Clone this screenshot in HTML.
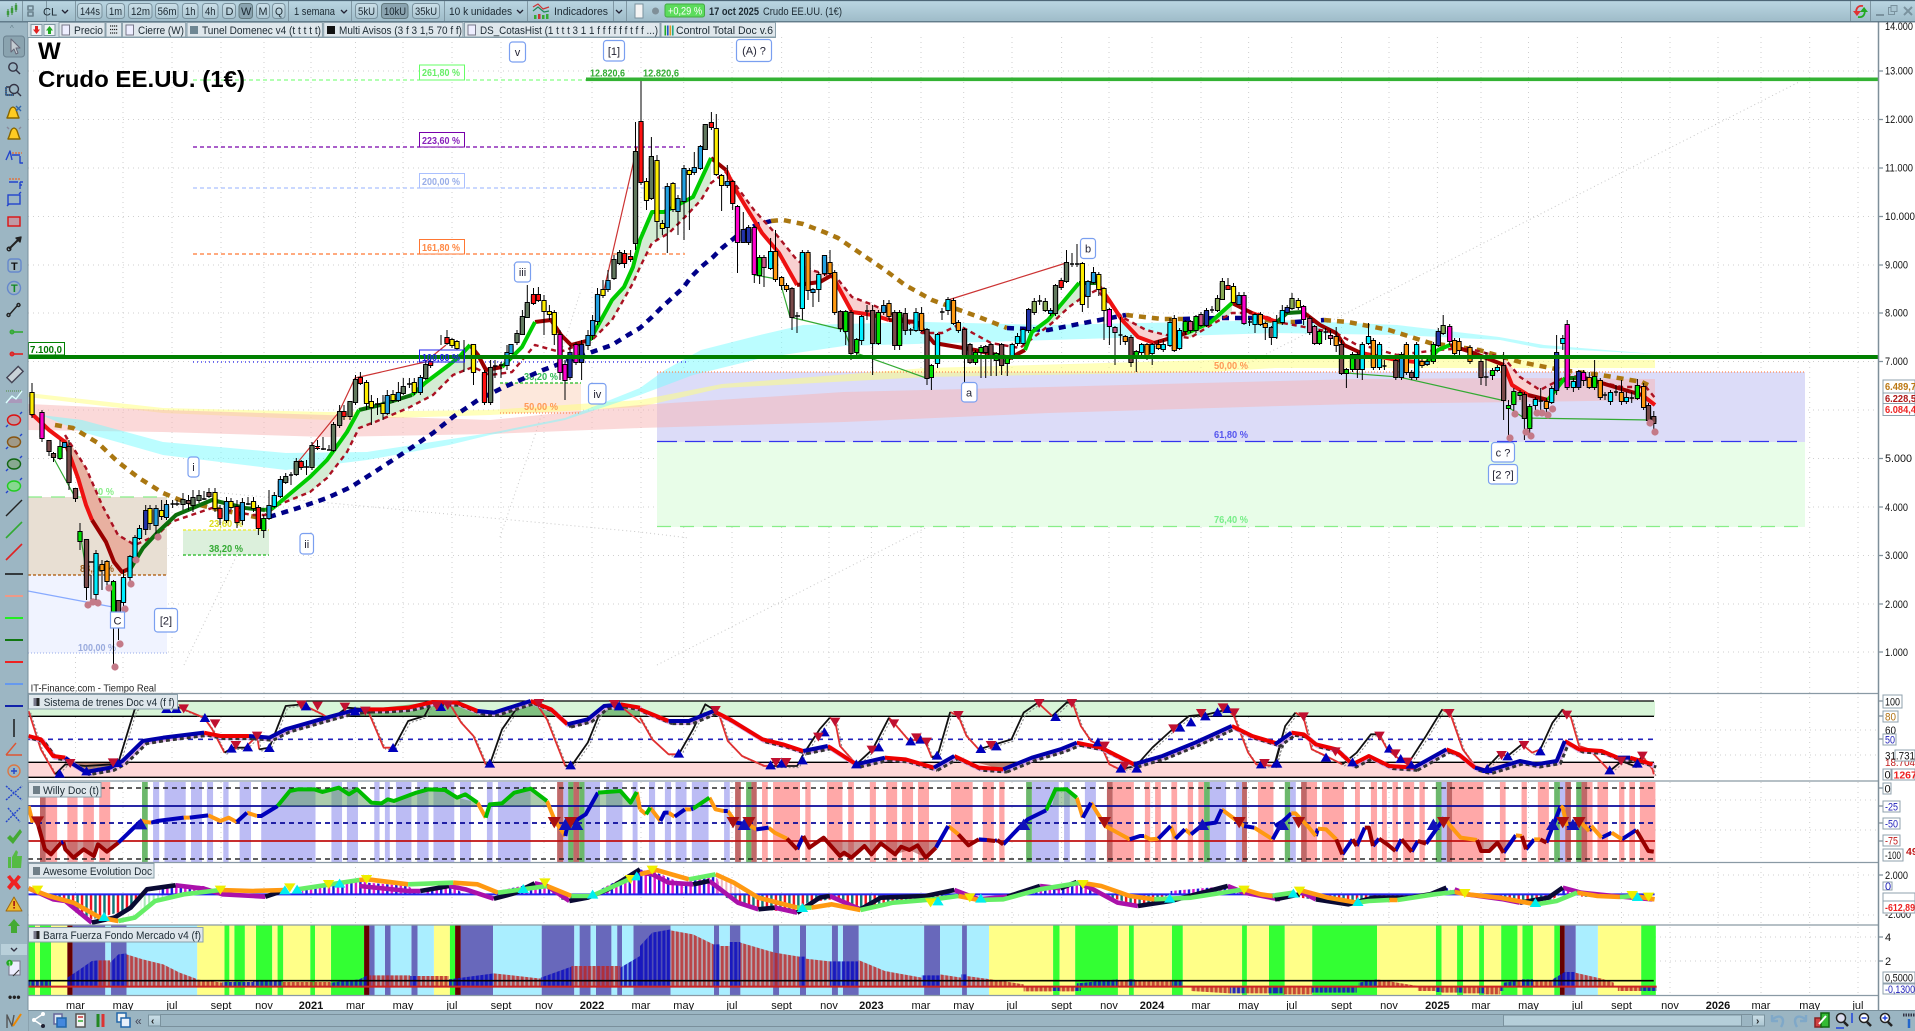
<!DOCTYPE html>
<html lang="es"><head><meta charset="utf-8"><title>Crudo EE.UU. (1€)</title>
<style>
html,body{margin:0;padding:0;background:#fff;width:1915px;height:1031px;overflow:hidden}
svg{display:block;font-family:"Liberation Sans",sans-serif}
path{vector-effect:non-scaling-stroke;stroke-linejoin:round}
.b{vector-effect:none}
.f{fill:none}
.tb{font-size:11px;fill:#1c2a33}
.ax{font-size:11px;fill:#111}
.fb{font-size:10px;font-weight:bold}
.btn{fill:url(#bg);stroke:#7a929e;stroke-width:1}
.on{fill:#8aa3af;stroke:#62797f;stroke-width:1}
.lg{fill:#dfe7ec;stroke:#8ba0ab;stroke-width:1}
.bx{fill:#fff;stroke:#8fa0ac;stroke-width:1}
.wv{fill:#fff;stroke:#7a9ff0;stroke-width:1.2}
.wt{font-size:11px;fill:#223;text-anchor:middle}
.mk{fill:none;stroke:none}
</style></head><body>
<svg width="1915" height="1031" viewBox="0 0 1915 1031" xmlns="http://www.w3.org/2000/svg">
<defs>
<linearGradient id="tg" x1="0" y1="0" x2="0" y2="1"><stop offset="0" stop-color="#bbd7e3"/><stop offset="1" stop-color="#9ebbc8"/></linearGradient>
<linearGradient id="bg" x1="0" y1="0" x2="0" y2="1"><stop offset="0" stop-color="#cbdfe8"/><stop offset="1" stop-color="#aac5d1"/></linearGradient>
<marker id="u1" markerUnits="userSpaceOnUse" overflow="visible" markerWidth="1" markerHeight="1"><path d="M0-14 13 13H-13z" fill="#0000bb"/></marker>
<marker id="d1" markerUnits="userSpaceOnUse" overflow="visible" markerWidth="1" markerHeight="1"><path d="M-13-13H13L0 14z" fill="#c01030"/></marker>
<marker id="u2" markerUnits="userSpaceOnUse" overflow="visible" markerWidth="1" markerHeight="1"><path d="M0-17 16 17H-16z" fill="#1111bb"/></marker>
<marker id="d2" markerUnits="userSpaceOnUse" overflow="visible" markerWidth="1" markerHeight="1"><path d="M-16-17H16L0 17z" fill="#aa1111"/></marker>
<marker id="u3" markerUnits="userSpaceOnUse" overflow="visible" markerWidth="1" markerHeight="1"><path d="M0-14 14 13H-14z" fill="#00eeee"/></marker>
<marker id="d3" markerUnits="userSpaceOnUse" overflow="visible" markerWidth="1" markerHeight="1"><path d="M-14-13H14L0 14z" fill="#eeee00"/></marker>
<marker id="dot" markerUnits="userSpaceOnUse" overflow="visible" markerWidth="1" markerHeight="1"><circle r="3.6" fill="#c47a88"/></marker>
<pattern id="bm" patternUnits="userSpaceOnUse" width="22" height="10"><rect x="0" width="6" height="10" fill="#1818dd"/><rect x="11" width="6" height="10" fill="#dd11cc"/></pattern>
<pattern id="rt" patternUnits="userSpaceOnUse" width="22" height="10"><rect x="0" width="6" height="10" fill="#ee1122"/><rect x="11" width="6" height="10" fill="#117777"/></pattern>
<pattern id="lg" patternUnits="userSpaceOnUse" width="11" height="10"><rect width="5" height="10" fill="#a8e8b8"/></pattern>
<pattern id="lp" patternUnits="userSpaceOnUse" width="11" height="10"><rect width="5" height="10" fill="#f0b8c0"/></pattern>
<pattern id="hr" patternUnits="userSpaceOnUse" width="11" height="10"><rect width="11" height="10" fill="#c23030" fill-opacity=".35"/><rect width="7" height="10" fill="#bb2222" fill-opacity=".75"/></pattern>
<pattern id="hb" patternUnits="userSpaceOnUse" width="11" height="10"><rect width="11" height="10" fill="#1a1ab0" fill-opacity=".35"/><rect width="7" height="10" fill="#1010c0" fill-opacity=".85"/></pattern>

<g id="all" fill="none">
<path id="cY" d="M32 393V414M150 509V523M161.6 511V516M215 493V508M231 502V507M253.5 502V508M366.5 383V403M371.4 402V407M383 404V413M393 395V400M414.3 383V392M452 340V345M457 342V348M473.5 345V372M544 301V311M549.4 312V314M554.3 313V334M603 290V295M646.5 182V200M657 161V221M662.4 224V228M673 184V209M689.4 171V174M716.3 129V174M721.6 176V185M1082.4 264V304M1098.8 275V289M1104 289V310M1233.5 287V302M1298.3 301V307"/>
<path id="cM" d="M42 413V438M560 335V372M565 365V380M576 345V362M737.5 207V242M754.3 228V274M1109.4 310V326M1244 296V323M1303.6 307V319M1449.7 327V341M1567.2 325V387M1583.6 373V380"/>
<path id="cB" d="M49 441V451M53.5 454V457M69 447V482M75.5 489V498M86.5 540V587M118.5 601V612M188.5 501V503M209 493V496M792 289V317M840.4 312V328M851 313V353M872.6 311V343M894.7 313V345M905.3 314V330M927 330V378M964.5 330V355M970 345V362M985.7 347V352M991 345V358M1001.6 345V365M1131 338V362M1271.4 328V337M1341.5 345V373M1357.4 355V369M1395.8 361V377M1411.7 373V377M1481 362V377M1503.6 366V400M1524.4 395V418M1648.5 406V420M1653.8 417V423"/>
<path id="cG" d="M183 500V504M193 498V505M199 496V500M285.7 477V482M296.3 462V474M312 446V467M333.5 425V450M339.6 412V425M350 402V416M355.5 380V402M403.3 387V393M425.7 365V378M490.6 368V402M517 334V342M522.4 317V334M527.3 303V317M614 260V278M619.6 253V263M635.5 152V243M651.4 157V198M705.3 125V149M1055.5 286V313M1066.5 263V281"/>
<path id="cO" d="M1034.3 302V312M1045.3 302V310M1217.5 299V310M1222.4 282V299M1292 299V308M1443.2 326V333"/>
<path id="cC" d="M96 554V594M123.5 578V602M130 557V577M135 538V557M139.5 529V538M274.3 496V506M770.6 252V268M802.4 253V308M818.8 275V289M861.6 317V340M916 313V330M937.5 335V363M948 300V310M1012.2 345V357M1017.5 337V343M1023 330V343M1141.6 345V352M1152.2 345V353M1163.3 345V349M1170 323V345M1179.6 331V348M1255 315V324M1275 322V337M1282.3 311V322M1362.3 345V369M1368.5 337V343M1379.5 345V367M1416.6 345V377M1497.4 368V370M1535.4 400V405M1551.7 389V402M1573.4 382V387M1610.5 393V401M1626.4 398V401M1562.8 339V343"/>
<path id="cL" d="M64.5 443V447M156 509V525M166.5 505V517M226.5 502V520M242.4 503V520M269 506V518M280.4 480V496M387.3 396V413M398.4 393V400M420.4 378V392M507 353V365M511 345V353M588 336V345M592.6 321V335M597.5 295V321M608 281V289M667.3 187V227M678 199V211M684 169V201M694.3 168V172M700.4 147V168M727.3 182V185M813 290V292M824.5 256V273M883.7 306V312M1050.6 311V313M1088 282V296M1093.5 273V282M1239 296V304M1401.5 355V377M1427.2 362V364"/>
<path id="cN" d="M145.7 511V529M570 353V377M581.6 345V362M743.3 230V242M748.6 228V242M1028.6 310V330M1206.5 311V325M1287.2 308V312M1438.3 332V345M1556.6 353V390M1578.7 372V387"/>
<path id="cR" d="M220 509V518M237 507V522M258.4 508V528M301.2 462V467M317.5 447V448M344 412V416M360.4 378V383M430.6 362V365M447 338V343M484.5 373V402M533.5 295V303M538.4 295V300M624.5 254V263M630.6 257V259M641 122V182M711.4 123V127M732.7 182V203M1061.2 281V287M1228 286V289"/>
<path id="cA" d="M102 565V570M107 562V581M775.5 252V279M781.6 278V285M786.5 286V289M808 253V290M830 263V273M834.7 273V312M889 304V316M921.6 314V330M953.5 301V323M958.4 323V330M1125.3 337V341M1147 345V355M1158.4 345V348M1174.3 319V350M1260.4 315V324M1265.3 324V327M1336.2 337V345M1373.4 341V367M1406.4 345V372M1422 362V365M1454.6 341V353M1459 342V350M1470 348V361M1546.4 402V408M1589.3 378V387M1600.3 381V397M1621.5 393V401M1643.6 387V407"/>
<path id="cE" d="M60 447V458M80 532V541M113.5 582V612M263.7 519V530M759.6 258V275M845.7 312V331M856.7 340V352M878.4 313V343M899.6 313V345M931.4 366V377M975.5 353V362M981 348V352M996.3 354V360M1007.3 359V363M1136.3 352V355M1185.3 322V331M1196 317V330M1319.5 332V343M1346.4 370V373M1352.5 355V369M1433.4 345V361M1492.5 371V375M1508.5 406V408M1513.8 392V404M1520 393V395M1529.7 407V428M1594.6 377V387M1637.4 386V398"/>
<path id="cP" d="M764 258V267M1115 328V332M1190.6 322V330M1201 315V325M1309.7 319V332M1314.6 327V343M1330.5 336V338"/>
</g>

<path id="r7" d="M70 150 100 160 130 210 160 215M500 140 540 150 610 150M900 70 940 70 1000 65 1060 48 1120 50 1170 75M1300 45 1350 70 1390 115M1520 55 1568 65"/>
<path id="n7" d="M160 215 180 235 210 258 270 245 300 225 350 165 400 155 500 140M610 150 660 155 700 130 800 95 860 75 900 70M1170 75 1210 80 1300 45M1390 115 1440 100 1480 60 1520 55"/>
<path id="r8" d="M0 70 70 105M180 75 220 100 300 160 350 175 400 195M460 180 530 235M600 215 650 220 720 245M770 210 830 245 890 250M1070 170 1130 185 1210 235M1450 120 1500 150 1568 175"/>
<path id="n8" d="M70 105 120 105 180 75M400 195 460 180M530 235 600 215M720 245 770 210M890 250 960 215 1030 190 1070 170M1210 235 1280 210 1360 170 1450 120"/>
<path id="r9" d="M0 175M40 140 70 145 100 175 150 190 190 235 230 210 280 240 340 245M420 190 450 205 490 245M710 165 745 190 800 195 840 215M870 215 925 235"/>
<path id="n9" d="M0 175 40 140M340 245 420 190M490 245 520 255 600 225 640 235 690 225 710 165M840 215 870 215"/>
<path id="tr7" d="M70 75 100 190 135 265M440 65 500 95 520 130 550 200M600 185 630 150 635 190M740 55 790 85 810 100M900 70 940 185 965 185M1100 50 1130 110 1160 150 1190 235M1310 45 1340 100 1385 240M1510 50 1560 100 1568 110"/>
<path id="tk7" d="M135 265 160 235 210 240 275 235 290 230 330 70 370 45 440 65M550 200 570 185 600 185M635 190 660 185 700 60 740 55M810 100 850 65 900 70M965 185 1000 105 1040 90 1060 45 1100 50M1190 235 1200 235 1230 130 1270 60 1310 45M1385 240 1400 240 1440 170 1470 80 1510 50"/>
<path id="tr8" d="M0 95 30 160 70 205 95 205M180 70 195 90 215 165 250 210 305 240 320 240M465 95 478 105 490 180 530 235M610 95 625 115 660 165 680 160 700 170 715 215M760 78 780 90 800 150 830 190M975 50 1010 90M1060 50 1080 120 1105 165 1130 180 1150 235 1175 250M1440 70 1455 90 1490 200 1510 235 1555 240"/>
<path id="tk8" d="M95 205 130 130 160 55 180 70M320 240 385 240 400 205 440 130 465 95M530 235 570 190 610 95M715 215 730 205 760 78M830 190 870 175 910 160 940 80 975 50M1010 90 1045 50 1060 50M1175 250 1215 240 1255 185 1300 135 1345 90 1390 85 1440 70M1555 240 1568 180"/>
<path id="tr9" d="M50 80 70 95 90 190 125 210 165 235M255 145 275 190 300 215 325 235M410 70 430 85 460 190 490 240 515 250M550 205 570 210M605 175 630 200 650 190M705 70 725 95 745 180 770 190 820 255M900 210 925 250 928 265"/>
<path id="tk9" d="M0 230 25 120 50 80M165 235 200 200 235 145 255 145M325 235 370 150 410 70M515 250 550 205M570 210 605 175M650 190 680 110 705 70M820 255 850 225 880 240 900 210"/>
</defs>

<rect width="1915" height="1031" fill="#fff"/>

<!-- vertical grid -->
<path fill="none" stroke="#cfcfcf" stroke-width="1" stroke-dasharray="1 4" d="M75.5 37V995M123 37V995M172 37V995M221 37V995M264 37V995M311 37V995M355.5 37V995M403 37V995M452 37V995M501 37V995M544 37V995M592 37V995M641 37V995M683.7 37V995M732 37V995M781.6 37V995M829 37V995M871.4 37V995M921 37V995M963.7 37V995M1012 37V995M1061.6 37V995M1109 37V995M1152 37V995M1201 37V995M1248.6 37V995M1291.7 37V995M1341.5 37V995M1389 37V995M1437.4 37V995M1481 37V995M1528.5 37V995M1577.4 37V995M1621.5 37V995M1670 37V995M1718 37V995M1761 37V995M1809.7 37V995M1858 37V995"/>
<!-- horizontal grid -->
<path fill="none" stroke="#cfcfcf" stroke-width="1" stroke-dasharray="1 4" d="M28 71H1878M28 119.5H1878M28 168H1878M28 216.5H1878M28 265H1878M28 313H1878M28 361.5H1878M28 410H1878M28 458.5H1878M28 507H1878M28 555.5H1878M28 604H1878M28 652H1878M1655 730H1878M1655 755H1878M1655 800H1878M1655 830H1878M28 875H1878M28 915H1878M1655 937H1878M1655 961H1878"/>

<!-- gray dotted trend lines -->
<path fill="none" stroke="#c8c8c8" stroke-width="1" stroke-dasharray="1 3" d="M657 665 1799 82M212 492 640 532 689 538M184 665 237 555M122 638 167 548M500 537 535 435 581 290"/>

<!-- left fib rects -->
<rect x="28" y="497" width="139" height="78" fill="#e8dfd3"/>
<rect x="28" y="575" width="139" height="78" fill="#f0f3ff"/>
<rect x="183" y="530" width="86" height="25" fill="#dcf0dc"/>
<rect x="500" y="383" width="81" height="30" fill="#fde8dc"/>
<!-- big fib rects -->
<rect x="657" y="372" width="1148" height="70" fill="#dcdcf8"/>
<rect x="657" y="442" width="1148" height="85" fill="#e8fde8"/>

<!-- ribbons -->
<path fill="#ffff78" fill-opacity=".5" d="M28 393 163 408 327 412 490 410 640 400 722 384 926 368 1211 360 1275 358 1655 360V368L1275 368 1211 372 926 377 722 388 640 407 490 415 327 420 163 413 28 397z"/>
<path fill="#f8b4b4" fill-opacity=".5" d="M28 404 163 410 327 415 490 420 640 405 844 392 1048 387 1280 381 1357 379 1520 378 1655 379V400L1520 402 1357 404 1280 406 1048 413 844 422 640 428 490 434 327 437 163 432 28 430z"/>
<path fill="#78fbff" fill-opacity=".5" d="M41 415 82 420 163 442 286 453 367 452 490 433 565 418 640 388 665 370 701 350 760 335 803 325 926 322 1048 325 1280 320 1397 325 1499 337 1544 345 1655 354 1540 348 1500 340 1400 335 1275 333 1050 340 844 346 762 358 693 375 640 395 565 420 490 435 449 445 367 460 286 470 163 455 82 432z"/>

<!-- fib lines -->
<path fill="none" stroke="#66ff66" stroke-width="1" stroke-dasharray="4 3" d="M193 80H586"/>
<path fill="none" stroke="#7700aa" stroke-width="1.2" stroke-dasharray="4 3" d="M193 147H685"/>
<path fill="none" stroke="#aac0ff" stroke-width="1.2" stroke-dasharray="4 3" d="M193 188H685"/>
<path fill="none" stroke="#ff7733" stroke-width="1.2" stroke-dasharray="4 3" d="M193 254H685"/>
<path fill="none" stroke="#2222ee" stroke-width="1.2" stroke-dasharray="1 3" d="M193 362H687"/>
<path fill="none" stroke="#22bb22" stroke-width="1.2" stroke-dasharray="3 2" d="M500 383H581M183 555H269"/>
<path fill="none" stroke="#ff8855" stroke-width="1.2" stroke-dasharray="1 2" d="M500 413H581M657 372H1805"/>
<path fill="none" stroke="#eeee22" stroke-width="1.2" stroke-dasharray="3 2" d="M183 530H269"/>
<path fill="none" stroke="#88ee88" stroke-width="1.2" stroke-dasharray="14 9" d="M28 497H167M657 526.5H1805"/>
<path fill="none" stroke="#aa5500" stroke-width="1.2" stroke-dasharray="3 2" d="M28 575H167"/>
<path fill="none" stroke="#aabbee" stroke-width="1.2" stroke-dasharray="1 2" d="M28 653H167"/>
<path fill="none" stroke="#3333ee" stroke-width="1.2" stroke-dasharray="20 8" d="M657 441.5H1805"/>

<!-- fib labels -->
<rect x="419.5" y="65" width="45" height="15" fill="#fff" stroke="#66ff66"/><text class="fb" x="422" y="76" fill="#66ee66" textLength="38" lengthAdjust="spacingAndGlyphs">261,80 %</text>
<rect x="419.5" y="132.5" width="45" height="14.5" fill="#fff" stroke="#7700aa"/><text class="fb" x="422" y="144" fill="#8822bb" textLength="38" lengthAdjust="spacingAndGlyphs">223,60 %</text>
<rect x="419.5" y="173.5" width="45" height="14.5" fill="#fff" stroke="#aac0ff"/><text class="fb" x="422" y="185" fill="#99aee8" textLength="38" lengthAdjust="spacingAndGlyphs">200,00 %</text>
<rect x="419.5" y="239.5" width="45" height="14.5" fill="#fff" stroke="#ff7733"/><text class="fb" x="422" y="251" fill="#ff8844" textLength="38" lengthAdjust="spacingAndGlyphs">161,80 %</text>
<text class="fb" x="80" y="495" fill="#88ee88" textLength="34" lengthAdjust="spacingAndGlyphs">76,40 %</text>
<text class="fb" x="80" y="572" fill="#a06020" textLength="34" lengthAdjust="spacingAndGlyphs">88,20 %</text>
<text class="fb" x="78" y="651" fill="#99aadd" textLength="38" lengthAdjust="spacingAndGlyphs">100,00 %</text>
<text class="fb" x="209" y="527" fill="#dddd22" textLength="34" lengthAdjust="spacingAndGlyphs">23,60 %</text>
<text class="fb" x="209" y="552" fill="#33aa33" textLength="34" lengthAdjust="spacingAndGlyphs">38,20 %</text>
<text class="fb" x="524" y="380" fill="#33bb55" textLength="34" lengthAdjust="spacingAndGlyphs">38,20 %</text>
<text class="fb" x="524" y="410" fill="#ff9955" textLength="34" lengthAdjust="spacingAndGlyphs">50,00 %</text>
<text class="fb" x="1214" y="369" fill="#ff9955" textLength="34" lengthAdjust="spacingAndGlyphs">50,00 %</text>
<text class="fb" x="1214" y="438" fill="#5555ee" textLength="34" lengthAdjust="spacingAndGlyphs">61,80 %</text>
<text class="fb" x="1214" y="523" fill="#77ee88" textLength="34" lengthAdjust="spacingAndGlyphs">76,40 %</text>

<!-- fills between fast and slow lines -->
<path fill="#e8b0a0" d="M65 442 78 478 86 505 92 520 106 542 114 562 122 572 131 568 135 545 118 535 102 505 86 468 65 435z"/>
<path fill="#d4ecd4" d="M273 508 310 477 327 460 347 432 359 410 380 405 412 395 425 383 449 365 461 355 470 345 473 367 453 375 433 395 408 408 375 422 359 428 347 452 327 478 310 492 278 505zM590 340 612 300 624 287 633 267 640 240 652 212 664 212 693 197 711 158 711 183 701 200 685 217 669 233 652 243 640 267 633 283 612 320 592 340zM1032 332 1048 320 1069 295 1079 283 1083 297 1069 307 1052 323zM1187 333 1211 322 1232 303 1232 313 1211 325 1190 338z"/>
<path fill="#f9d0d0" d="M726 170 746 207 762 233 779 253 797 285 820 282 832 275 852 312 873 315 917 322 922 333 905 320 873 305 852 297 836 277 811 270 797 260 775 233 754 210 730 178zM1097 283 1109 300 1122 320 1138 337 1154 343 1166 335 1146 330 1122 317 1097 290zM1504 365 1512 385 1528 395 1548 400 1540 390 1520 377 1504 358zM1585 378 1642 395 1655 405 1655 398 1646 387 1622 387 1569 375z"/>

<!-- slow MA coloured -->
<path class="f" stroke="#aa7711" stroke-width="4.5" stroke-dasharray="7 6" d="M55 425 73 428 98 443 118 462 139 478 163 493 180 500 212 508 245 515 261 518M771 221 783 220 803 224 824 232 838 238 860 253 885 270 905 285 932 300 954 308 979 317 1007 328M1126 315 1162 319 1183 319M1252 318 1280 322 1295 322M1324 320 1348 322 1389 330 1430 343 1479 350 1520 362 1561 370 1601 375 1642 382 1648 385"/>
<path class="f" stroke="#000088" stroke-width="4.5" stroke-dasharray="7 6" d="M269 517 298 508 327 498 351 487 376 471 408 450 433 433 453 417 478 400 502 388 543 370 592 352 612 345 628 335 640 328 652 317 662 307 683 288 691 277 701 267 713 257 722 248 738 235 756 225 771 221M1007 328 1048 330 1089 322 1126 315M1183 319 1220 318 1252 318M1295 322 1324 320"/>

<!-- slow dashed red -->
<path class="f" stroke="#aa1122" stroke-width="2.4" stroke-dasharray="5 4" d="M65 435 86 468 102 505 118 535 135 545 157 535 171 522 212 508 253 515 265 515 278 505 310 492 327 478 347 452 359 428 375 422 408 408 433 395 453 375 473 367 490 375 512 372 535 345 560 352 592 340 612 320 633 283 640 267 652 243 669 233 685 217 701 200 711 183 726 172 754 210 775 233 797 260 811 270 836 277 852 297 873 305 905 320 922 333 942 333 958 325 991 343 1020 348 1052 323 1069 307 1083 297 1097 290 1122 317 1146 330 1166 335 1190 338 1211 325 1232 313 1256 313 1283 323 1336 333 1357 345 1369 347 1397 355 1438 350 1467 348 1504 358 1520 377 1540 390 1569 375 1622 387 1646 387 1655 398"/>

<!-- thin trend lines -->
<path class="f" stroke="#33aa33" stroke-width="1.2" d="M53 457 75.5 498M80 532 86 570M754 275 777 279M781 285 790 317 844 330 850 345M856 353 926 378M1346 373 1399 377 1501 400M1508 407 1524 418 1650 420"/>
<path class="f" stroke="#cc3333" stroke-width="1.2" d="M298 462 339 412 355 378 425 362 446 345M604 290 637 147M948 300 1066 263"/>
<path class="f" stroke="#88aaff" stroke-width="1.2" d="M28 591 118 608"/>

<!-- fast line -->
<g fill="none" stroke-width="4">
<path stroke="#ee1111" d="M31 413 49 430 65 442 78 478 86 505 92 520M726 170 734 187 746 207 762 233 779 253 797 285M832 275 840 290 852 312 873 315 889 320M1097 283 1109 300 1122 320 1138 337 1154 343M1252 313 1277 322M1361 353 1397 360 1426 363M1504 365 1512 385 1528 395M1642 395 1655 405"/>
<path stroke="#990000" d="M92 520 106 542 114 562 122 572 131 568M470 345 478 355 486 370 502 367M535 322 551 320 561 335 571 345 590 340M711 158 726 170M797 285 820 282 832 275M889 320 917 322 934 343 975 350 1010 358 1025 350M1154 343 1187 333M1232 303 1252 313M1303 312 1320 325 1336 333 1344 345 1361 353M1450 345 1471 352 1504 365M1528 395 1548 400M1585 378 1618 388 1642 395"/>
<path stroke="#0b6f0b" d="M131 568 143 548 157 533 176 515 212 500 245 508 265 510M359 410 380 405 412 395M1079 283 1097 283M1277 322 1287 313 1303 312M1565 378 1585 378"/>
<path stroke="#00cc00" d="M265 510 273 508 310 477 327 460 347 432 359 410M412 395 425 383 449 365 461 355 470 345M502 367 522 347 535 322M590 340 612 300 624 287 633 267 640 240 652 212 664 212 693 197 711 158M1025 350 1032 332 1048 320 1069 295 1079 283M1187 333 1211 322 1232 303M1426 363 1438 350 1450 345M1548 400 1557 388 1565 378"/>
</g>

<!-- wicks -->
<path class="f" stroke="#000" stroke-width="1" d="M32 383V418M42 410V442M49 441V456M53.5 452V462M60 440V460M69 440V490M75.5 489V502M80 523V550M86.5 540V600M91 575V600M96 550V600M102 560V590M107 560V590M113.5 580V667M118.5 600V640M123.5 570V610M130 555V585M135 535V560M139.5 525V540M145.7 505V535M150 505V530M156 505V535M161.6 500V520M166.5 500V520M172.6 500V508M177 500V506M183 493V510M188.5 495V510M193 490V512M199 490V503M204 491V500M209 488V498M215 488V512M220 505V525M226.5 497V523M231 498V510M237 500V528M242.4 498V525M248 497V505M253.5 497V512M258.4 505V535M263.7 515V538M269 490V520M274.3 492V508M280.4 476V498M285.7 473V484M291 472V485M296.3 458V476M301.2 460V470M306.5 460V475M312 442V470M317.5 440V450M323 437V450M329 445V450M333.5 422V452M339.6 405V428M344 405V420M350 402V420M355.5 375V405M360.4 372V385M366.5 380V410M371.4 395V425M377.5 398V415M383 395V420M387.3 390V415M393 390V403M398.4 382V402M403.3 378V395M409.4 378V388M414.3 378V395M420.4 375V395M425.7 360V380M430.6 358V368M441 335V345M447 330V345M452 338V348M457 340V350M464 340V372M473.5 345V385M484.5 370V405M490.6 360V405M495 360V378M501 362V378M507 345V370M517 330V345M522.4 310V335M527.3 285V318M533.5 288V305M538.4 287V302M544 295V335M549.4 305V320M554.3 310V345M560 330V380M565 360V400M570 345V380M576 342V365M581.6 340V380M588 330V350M592.6 315V340M597.5 288V325M603 280V298M608 270V292M614 255V280M619.6 250V265M624.5 250V268M630.6 250V262M635.5 122V250M641 80V185M646.5 178V210M651.4 137V200M657 155V240M662.4 220V235M667.3 183V253M673 182V212M678 195V235M684 165V240M689.4 168V230M694.3 152V175M700.4 145V170M705.3 125V150M711.4 112V130M716.3 114V176M721.6 174V211M727.3 165V188M732.7 180V210M737.5 205V273M743.3 212V243M748.6 225V245M754.3 226V283M759.6 255V284M764 255V287M770.6 238V270M775.5 230V282M781.6 276V290M786.5 283V292M792 287V330M797 312V333M802.4 250V320M808 250V300M813 288V307M818.8 272V302M824.5 255V276M830 250V275M834.7 270V315M840.4 310V332M845.7 310V345M851 310V360M856.7 338V356M861.6 315V345M867 305V320M872.6 305V375M878.4 310V345M883.7 300V315M889 300V320M894.7 310V350M899.6 310V350M905.3 308V335M910.6 328V335M916 308V332M921.6 307V332M927 328V385M931.4 364V390M937.5 333V368M942 308V320M948 297V315M953.5 298V325M958.4 320V333M964.5 328V393M970 343V364M975.5 350V365M981 345V378M985.7 345V378M991 343V376M996.3 352V376M1001.6 343V375M1007.3 357V376M1012.2 343V360M1017.5 333V346M1023 328V345M1028.6 308V333M1034.3 298V315M1039.6 295V305M1045.3 298V312M1050.6 308V316M1055.5 284V316M1061.2 278V290M1066.5 250V283M1072 253V267M1077 244V267M1082.4 262V312M1088 280V308M1093.5 267V284M1098.8 272V296M1104 287V340M1109.4 308V345M1115 326V365M1120.4 317V345M1125.3 335V345M1131 335V367M1136.3 350V372M1141.6 343V356M1147 343V360M1152.2 343V365M1158.4 340V350M1163.3 340V352M1170 318V347M1174.3 315V352M1179.6 328V350M1185.3 320V335M1190.6 320V333M1196 315V333M1201 312V327M1206.5 308V327M1212 306V313M1217.5 295V312M1222.4 278V300M1228 278V290M1233.5 283V303M1239 292V305M1244 292V325M1249.5 318V326M1255 313V333M1260.4 312V326M1265.3 322V340M1271.4 326V345M1276.7 315V339M1282.3 305V325M1287.2 305V314M1292 293V310M1298.3 298V310M1303.6 305V325M1309.7 316V335M1314.6 325V345M1319.5 330V345M1325.6 328V340M1330.5 330V345M1336.2 327V352M1341.5 340V375M1346.4 368V388M1352.5 352V372M1357.4 352V378M1362.3 342V380M1368.5 323V345M1373.4 338V370M1379.5 342V370M1384.4 360V370M1395.8 358V380M1401.5 352V380M1406.4 342V375M1411.7 370V380M1416.6 342V380M1422 358V368M1427.2 358V366M1433.4 342V364M1438.3 328V347M1443.2 315V335M1449.7 324V345M1454.6 338V356M1459.5 338V356M1470 345V364M1481 358V385M1486 352V386M1492.5 368V380M1497.4 365V372M1503.6 352V420M1508.5 400V440M1513.8 388V415M1520 390V400M1524.4 392V440M1529.7 404V435M1535.4 397V415M1540.7 388V410M1546.4 398V412M1551.7 386V404M1556.6 335V395M1562.8 335V350M1567.2 320V390M1573.4 378V392M1578.7 370V390M1583.6 370V386M1589.3 372V389M1594.6 360V390M1600.3 378V400M1605 392V400M1610.5 390V405M1616 385V396M1621.5 380V405M1626.4 392V404M1631.7 392V403M1637.4 379V400M1643.6 383V410M1648.5 403V422M1653.8 411V430"/>
<!-- doji -->
<path class="f" stroke="#000" stroke-width="1.6" d="M88.5 562H93.5M170.5 504H175M175 504H179.5M202 499H206.5M246 504H250.5M289 475H293M304 467H309M321 449H326M327 450H331M375 404H380M407 384H412M493 366H497.5M499 365H503.5M795 316H800M865 311H869.5M908.5 330H913M940 312H944.5M1037.5 301H1042M1070 264H1074M1075 264H1079.5M1118.5 335H1122.5M1210 310H1214M1248 322H1252M1323.5 332H1328M1382.5 366H1386.5M1484 377H1488.5M1538.5 401H1543M1603 395H1607M1614 392H1618M1629.5 398H1634"/>

<!-- candle bodies -->
<g stroke="#000" stroke-width="5.2"><use href="#all" transform="translate(0,-1)"/><use href="#all" transform="translate(0,1)"/></g>
<g stroke-width="3.2">
<use href="#cY" stroke="#ffee00"/><use href="#cM" stroke="#ff00cc"/><use href="#cB" stroke="#7a4a4a"/><use href="#cG" stroke="#62795f"/><use href="#cO" stroke="#88aa55"/><use href="#cC" stroke="#00eeff"/><use href="#cL" stroke="#22a0e0"/><use href="#cN" stroke="#2233aa"/><use href="#cR" stroke="#ff1111"/><use href="#cA" stroke="#ff9911"/><use href="#cE" stroke="#00e000"/><use href="#cP" stroke="#cc5588"/>
</g>

<!-- dots -->
<path class="mk" style="marker:url(#dot)" d="M1510 438 1515 414 1526 432 1531 436 1537 413 1542 413 1548 415 1552.6 409 1650 423 1655 432M88 605 93 602 98 603 109 588 125 609 131 584 120 644 115 667 136 560 158 537"/>

<!-- main lines -->
<rect x="586" y="77.5" width="1292" height="3.6" fill="#33b233"/>
<rect x="28" y="355" width="1850" height="4" fill="#008000"/>
<rect x="419.5" y="350" width="45" height="12" fill="none" stroke="#2222ee"/><text class="fb" x="422" y="361" fill="#2222ee" textLength="38" lengthAdjust="spacingAndGlyphs">100,00 %</text>

<text x="590" y="76.5" font-size="10" font-weight="bold" fill="#33aa33" textLength="35" lengthAdjust="spacingAndGlyphs">12.820,6</text>
<text x="643" y="76.5" font-size="10" font-weight="bold" fill="#33aa33" textLength="36" lengthAdjust="spacingAndGlyphs">12.820,6</text>
<rect x="28.5" y="342.5" width="36" height="12.5" fill="#fff" stroke="#008000"/><text x="30" y="353" font-size="10" font-weight="bold" fill="#007700" textLength="32" lengthAdjust="spacingAndGlyphs">7.100,0</text>

<!-- title -->
<text x="38" y="59" font-size="24" font-weight="bold" fill="#000">W</text>
<text x="38" y="87" font-size="23" font-weight="bold" fill="#000" textLength="207" lengthAdjust="spacingAndGlyphs">Crudo EE.UU. (1€)</text>

<!-- wave labels -->
<g>
<rect class="wv" x="509.5" y="42" width="16" height="20" rx="3"/><text class="wt" x="517.5" y="56">v</text>
<rect class="wv" x="603.5" y="40.5" width="21" height="20.5" rx="3"/><text class="wt" x="614" y="55">[1]</text>
<rect class="wv" x="736.5" y="39.5" width="35" height="22" rx="3"/><text class="wt" x="754" y="54.5">(A) ?</text>
<rect class="wv" x="514.5" y="262" width="16" height="20" rx="3"/><text class="wt" x="522.5" y="276" fill="#66a">iii</text>
<rect class="wv" x="1080.5" y="238.5" width="15" height="20" rx="3"/><text class="wt" x="1088" y="252.5">b</text>
<rect class="wv" x="188" y="457" width="11" height="20" rx="3"/><text class="wt" x="193.5" y="471">i</text>
<rect class="wv" x="300" y="533.5" width="13.5" height="20.5" rx="3"/><text class="wt" x="306.7" y="548">ii</text>
<rect class="wv" x="588.5" y="383.5" width="17.5" height="20.5" rx="3"/><text class="wt" x="597.3" y="398">iv</text>
<rect class="wv" x="110.5" y="612" width="14" height="16" rx="0"/><text class="wt" x="117.5" y="624.5" fill="#79b">C</text>
<rect class="wv" x="154.5" y="608.5" width="23" height="23.5" rx="3"/><text class="wt" x="166" y="624.5" font-size="13">[2]</text>
<rect class="wv" x="961.5" y="382.5" width="15.5" height="19.5" rx="3"/><text class="wt" x="969" y="396.5">a</text>
<rect class="wv" x="1491.5" y="442.5" width="23" height="19.5" rx="3"/><text class="wt" x="1503" y="456.5">c ?</text>
<rect class="wv" x="1488.5" y="464.5" width="29" height="19.5" rx="3"/><text class="wt" x="1503" y="478.5">[2 ?]</text>
</g>

<text x="30.6" y="691.5" font-size="10.5" fill="#222" textLength="125.5" lengthAdjust="spacingAndGlyphs">IT-Finance.com - Tiempo Real</text>

<!-- PANEL 1 bg -->
<rect x="28" y="701" width="1627" height="15.3" fill="#d8f5d8"/>
<rect x="28" y="762.3" width="1627" height="15" fill="#ffd8d8"/>
<g transform="translate(0,686) scale(.40816,.33333)"><path fill="#80c080" d="M830 91 860 75 900 70 1060 48 1120 50 1170 78 1210 82 1300 45 1350 70 1375 91zM1450 91 1480 60 1520 55 1568 65V91z"/><path fill="#b88070" d="M165 229 210 255 270 245 285 229z"/></g>
<g transform="translate(640,686) scale(.40816,.33333)"><path fill="#b88070" d="M825 230 890 250 930 230zM520 230 530 235 545 230z"/></g>
<path class="f" stroke="#000" stroke-width="1.3" d="M28 701H1654M28 716.3H1654M28 762.3H1654M28 777.3H1654"/>
<path class="f" stroke="#2222bb" stroke-width="1.6" stroke-dasharray="5 5" d="M28 739.3H1654"/>

<g transform="translate(0,686) scale(.40816,.33333)" fill="none">
<g stroke="#888" stroke-width="1" stroke-dasharray="2 2" transform="translate(5,5)"><use href="#tr7"/><use href="#tk7"/></g>
<use href="#tr7" stroke="#e03030" stroke-width="1.8"/><use href="#tk7" stroke="#111" stroke-width="1.8"/>
<g stroke="#dcaee8" stroke-width="5" transform="translate(4,4)"><use href="#r7"/><use href="#n7"/></g>
<g stroke="#333" stroke-width="3" stroke-dasharray="4 3" transform="translate(9,8)"><use href="#r7"/><use href="#n7"/></g>
<use href="#r7" stroke="#ee0000" stroke-width="4"/><use href="#n7" stroke="#0000aa" stroke-width="4"/>
<path class="mk" style="marker:url(#u1)" d="M146 262 212 255 288 230 408 68 432 68 502 95 567 187 607 183 660 185 750 60 870 75 963 185 1080 62 1200 232 1398 237 1517 60"/>
<path class="mk" style="marker:url(#d1)" d="M172 232 277 230 450 68 527 113 578 178 630 150 738 57 778 60 845 63 895 75 1070 60 1097 58 1320 52 1505 55"/>
</g>
<g transform="translate(640,686) scale(.40816,.33333)" fill="none">
<g stroke="#888" stroke-width="1" stroke-dasharray="2 2" transform="translate(5,5)"><use href="#tr8"/><use href="#tk8"/></g>
<use href="#tr8" stroke="#e03030" stroke-width="1.8"/><use href="#tk8" stroke="#111" stroke-width="1.8"/>
<g stroke="#dcaee8" stroke-width="5" transform="translate(4,4)"><use href="#r8"/><use href="#n8"/></g>
<g stroke="#333" stroke-width="3" stroke-dasharray="4 3" transform="translate(9,8)"><use href="#r8"/><use href="#n8"/></g>
<use href="#r8" stroke="#ee0000" stroke-width="4"/><use href="#n8" stroke="#0000aa" stroke-width="4"/>
<path class="mk" style="marker:url(#u1)" d="M95 202 320 237 347 232 398 222 452 138 530 234 585 183 663 165 687 160 728 208 835 188 873 180 1018 92 1122 168 1178 247 1217 247 1323 124 1350 108 1385 90 1415 78 1440 68 1522 234 1558 232"/>
<path class="mk" style="marker:url(#d1)" d="M185 73 333 229 358 229 437 153 478 108 568 192 622 113 677 155 702 168 780 88 860 178 978 52 1058 52 1138 180 1188 240 1307 128 1375 82 1428 65 1456 80 1530 232"/>
</g>
<g transform="translate(1275,686) scale(.40816,.33333)" fill="none">
<g stroke="#888" stroke-width="1" stroke-dasharray="2 2" transform="translate(5,5)"><use href="#tr9"/><use href="#tk9"/></g>
<use href="#tr9" stroke="#e03030" stroke-width="1.8"/><use href="#tk9" stroke="#111" stroke-width="1.8"/>
<g stroke="#dcaee8" stroke-width="5" transform="translate(4,4)"><use href="#r9"/><use href="#n9"/></g>
<g stroke="#333" stroke-width="3" stroke-dasharray="4 3" transform="translate(9,8)"><use href="#r9"/><use href="#n9"/></g>
<use href="#r9" stroke="#ee0000" stroke-width="4"/><use href="#n9" stroke="#0000aa" stroke-width="4"/>
<path class="mk" style="marker:url(#u1)" d="M5 232 125 214 190 228 280 187 308 218 333 235 520 248 570 210 650 195 820 252 888 232"/>
<path class="mk" style="marker:url(#d1)" d="M70 92 148 197 256 150 295 203 325 228 427 82 555 208 610 178 715 87 848 225 900 210"/>
</g>

<!-- PANEL 2 -->
<g transform="translate(0,686) scale(.40816,.33333)" fill="none">
<path class="b" stroke="#bcbcf4" stroke-width="240" d="M375 408H390M403 408H455M468 408H495M507 408H522M547 408H560M587 408H615M640 408H773M812 408H838M850 408H877M917 408H930M943 408H955M970 408H1008M1022 408H1050M1062 408H1113M1127 408H1154M1193 408H1207M1220 408H1300M1380 408H1392M1432 408H1470M1485 408H1525M1550 408H1562"/>
<path class="b" stroke="#ffa8a8" stroke-width="240" d="M112 408H140M165 408H190M204 408H230M243 408H270"/>
<path class="b" stroke="#6cb86c" stroke-width="240" d="M348 408H362M1392 408H1405M1419 408H1432"/>
<path class="b" stroke="#c06868" stroke-width="240" d="M98 408H112M1365 408H1380M1405 408H1419"/>
</g>
<g transform="translate(640,686) scale(.40816,.33333)" fill="none">
<path class="b" stroke="#bcbcf4" stroke-width="240" d="M22 408H37M61 408H76M87 408H114M127 408H168M206 408H220M960 408H1026M1039 408H1053M1090 408H1117M1396 408H1436M1460 408H1475"/>
<path class="b" stroke="#ffa8a8" stroke-width="240" d="M299 408H313M326 408H392M405 408H418M458 408H496M510 408H524M563 408H578M603 408H630M642 408H669M681 408H708M762 408H815M840 408H867M880 408H893M1158 408H1210M1237 408H1250M1262 408H1276M1302 408H1316M1342 408H1355M1368 408H1382M1514 408H1552"/>
<path class="b" stroke="#6cb86c" stroke-width="240" d="M260 408H273M946 408H960M1382 408H1396"/>
<path class="b" stroke="#c06868" stroke-width="240" d="M233 408H247M273 408H286M1144 408H1158M1475 408H1487"/>
</g>
<g transform="translate(1275,686) scale(.40816,.33333)" fill="none">
<path class="b" stroke="#bcbcf4" stroke-width="240" d="M37 408H51M408 408H421M698 408H711"/>
<path class="b" stroke="#ffa8a8" stroke-width="240" d="M78 408H103M115 408H169M196 408H208M235 408H250M262 408H274M288 408H301M314 408H341M354 408H367M434 408H511M551 408H565M604 408H617M644 408H671M765 408H778M790 408H816M843 408H856M868 408H882M894 408H932"/>
<path class="b" stroke="#6cb86c" stroke-width="240" d="M24 408H37M394 408H408M684 408H698M738 408H751"/>
<path class="b" stroke="#c06868" stroke-width="240" d="M64 408H78M421 408H434M711 408H725M751 408H765"/>
</g>
<path class="f" stroke="#000" stroke-width="1.2" stroke-dasharray="5 4" d="M28 788H1655M28 859H1655"/>
<path class="f" stroke="#0a0a99" stroke-width="1.8" d="M28 806H1655"/>
<path class="f" stroke="#0a0a99" stroke-width="1.8" stroke-dasharray="5 4" d="M28 823H1655"/>
<path class="f" stroke="#c01010" stroke-width="1.8" d="M28 841H1655"/>
<g transform="translate(0,686) scale(.40816,.33333)" fill="none" stroke-width="4">
<path fill="#5a9a5a" fill-opacity=".5" d="M680 361 710 315 770 310 830 305 875 310 910 350 935 352 950 340 965 345 1020 320 1090 312 1120 335 1170 350V361zM1200 361 1230 352 1260 320 1300 308 1340 345 1350 361zM1450 361 1465 320 1520 315 1545 350 1560 318 1568 361z"/>
<path fill="#a04040" fill-opacity=".55" d="M100 466 110 490 125 505 150 470 160 490 180 515 205 490 230 510 240 475 262 497 285 466z"/>
<path stroke="#ff9911" d="M70 360 80 410M450 395 465 395M510 388 540 405 560 395 580 408M605 380 630 390M1170 350 1190 395M1340 345 1360 405 1385 450M1560 318 1568 370"/>
<path stroke="#990000" d="M92 410 110 490 125 505 150 470M155 468 160 490 180 515 205 490 230 510 240 475 262 497 290 470"/>
<path stroke="#0000bb" d="M150 470 155 468M290 470 345 405M370 410 385 405 450 395M465 395 510 388M580 408 605 380M630 390 640 390 680 360M1385 450 1390 420 1435 385 1465 320"/>
<path stroke="#ff9911" d="M345 405 370 410"/>
<path stroke="#00bb00" d="M680 360 710 315 730 310 770 310 790 318 830 305 855 325 875 310 910 350 935 352 950 340 965 345 1020 320 1050 310 1090 312 1120 335 1140 325 1170 350M1190 395 1200 355 1230 352 1260 320 1300 308 1340 345M1465 320 1520 315 1545 350 1560 318"/>
<path class="mk" style="marker:url(#d2)" d="M92 408 1358 410 1398 410"/>
<path class="mk" style="marker:url(#u2)" d="M345 413 1385 415 1413 415"/>
</g>
<g transform="translate(640,686) scale(.40816,.33333)" fill="none" stroke-width="4">
<path fill="#5a9a5a" fill-opacity=".5" d="M1010 361 1018 310 1045 310 1070 340 1075 361z"/>
<path fill="#a04040" fill-opacity=".55" d="M460 466 490 510 518 515 550 480 567 505 590 472 625 505 660 492 700 515 730 466z"/>
<path stroke="#ff9911" d="M0 370 15 385M25 365 50 405M70 380 85 392M110 370 125 370M170 335 185 370 205 375M215 375 235 410M265 415 285 430M315 425 330 440 360 458M755 420 780 445M1070 335 1085 395M1105 350 1140 420 1200 460M1235 450 1250 460 1270 458M1300 420 1312 458M1335 430 1350 445M1425 370 1480 420M1505 425 1550 460"/>
<path stroke="#00bb00" d="M15 385 25 365M130 368 170 335M995 373 1018 310 1045 310 1070 335"/>
<path stroke="#0000bb" d="M50 405 60 380 70 380M85 392 110 370M125 370 130 368M205 375 215 375M235 410 265 415M285 430 315 425M385 490 400 450M725 485 755 420M830 460 850 462M870 465 875 462M890 475 925 430 950 400 995 373M1085 395 1105 350M1200 460 1225 450 1235 450M1270 458 1300 420M1312 458 1335 430M1350 445 1380 415 1410 410 1425 370M1480 420 1505 425M1550 460 1568 420"/>
<path stroke="#990000" d="M360 458 385 490M400 450 415 485 450 455 490 510 500 500 518 515 550 480 567 505 590 472 625 505 640 482 660 492 680 478 700 515 725 485M780 445 805 478 830 460M850 462 870 465M875 462 890 475"/>
<path class="mk" style="marker:url(#d2)" d="M228 410 267 410 1138 410 1468 410"/>
<path class="mk" style="marker:url(#u2)" d="M255 415 940 415 1378 415"/>
</g>
<g transform="translate(1275,686) scale(.40816,.33333)" fill="none" stroke-width="4">
<path fill="#a04040" fill-opacity=".5" d="M495 466 505 495 525 495 545 470 560 500 575 466z"/>
<path stroke="#0000bb" d="M0 420 20 405 40 382M100 450 105 428M165 505 190 460M200 480 220 425M240 480 255 458M295 495 310 460M335 497 350 465M370 473 415 395M560 500 590 448M615 490 635 460M665 470 700 360M715 420 750 410M770 435 775 420M800 455 825 440M850 460 885 432"/>
<path stroke="#ff9911" d="M40 382 50 382 80 420 100 450M105 428 125 430 150 460M415 395 430 420 455 455 495 462M590 448 605 450M635 460 650 460M700 360 705 365 715 420M750 410 770 435M775 420 800 455M825 440 850 460"/>
<path stroke="#990000" d="M150 460 165 505M190 460 200 480M220 425 230 425 240 480M255 458 275 475 295 495M310 460 335 497M350 465 370 473M495 462 505 495 525 495 545 470 560 500M605 450 615 490M650 460 665 470M885 432 915 495 928 497"/>
<path class="mk" style="marker:url(#d2)" d="M58 410 413 410 705 410 745 410"/>
<path class="mk" style="marker:url(#u2)" d="M18 415 388 415 680 415 730 415"/>
</g>

<!-- PANEL 3 -->
<g transform="translate(0,686) scale(.40816,.33333)" fill="none" stroke-width="4.6">
<path fill="url(#rt)" d="M130 625V632L165 640 200 680 225 700 320 670 345 640V625z"/>
<path fill="url(#lg)" d="M345 625V680L380 645 400 635V625z"/>
<path fill="url(#bm)" d="M390 625V610L430 598 500 600 530 625zM740 625V612L880 585 900 590 1000 600 1030 625zM1040 625V610L1100 598 1140 625zM1230 625V612L1310 592 1340 600 1370 625zM1470 625V610L1568 550V625z"/>
<path fill="url(#rt)" d="M1370 625V640L1400 645 1420 625z"/>
<path stroke="#2222ee" stroke-width="2" d="M70 625H1568"/>
<path stroke="#aa11aa" d="M70 607 130 640 160 645 200 685 225 710M430 598 500 608 545 625 620 630 650 632M880 600 1000 615 1030 615M1100 600 1140 610 1210 638M1310 592 1340 600 1395 645"/>
<path stroke="#0a0a33" d="M225 710 280 695 320 665 360 610 430 598M650 632 700 612M1030 615 1100 600M1210 638 1260 622 1310 592M1395 645 1440 635 1490 610 1568 550"/>
<path stroke="#ff9911" d="M70 607 120 630 180 650 245 695 290 705M540 612 620 615 700 612M880 582 900 580 1000 595M1110 590 1170 595 1220 620M1340 600 1400 630"/>
<path stroke="#66ee66" d="M290 705 330 695 380 645 450 625 540 612M730 610 880 582M1000 595 1110 590M1220 620 1340 600M1400 630 1450 630 1550 575"/>
<path class="mk" style="marker:url(#d3)" d="M92 612 540 612 710 605 805 595 898 580 1335 590 1545 580"/>
<path class="mk" style="marker:url(#u3)" d="M255 692 698 612 728 610 832 592 1282 608 1452 625 1560 570"/>
</g>
<g transform="translate(640,686) scale(.40816,.33333)" fill="none" stroke-width="4.6">
<path fill="url(#bm)" d="M0 625V550L40 560 100 590 185 570 210 625zM960 625V610L1070 590 1120 625zM1300 625V615L1440 600 1470 625z"/>
<path fill="url(#lp)" d="M190 625V565L240 600 250 625z"/>
<path fill="url(#rt)" d="M210 625V635L290 670 385 680 410 650 470 640 540 670 620 650 720 640 760 625zM1130 625 1220 660 1260 645 1300 625z"/>
<path stroke="#2222ee" stroke-width="2" d="M0 625H1568"/>
<path stroke="#aa11aa" d="M0 560 30 565 70 590 130 595M170 585 240 650 290 670M330 665 385 680M465 630 540 670M770 612 830 640 900 632M980 600 1030 607M1070 588 1110 610 1170 650 1220 660M1440 600 1480 620 1568 640"/>
<path stroke="#0a0a33" d="M130 595 170 585M290 670 330 665M385 680 440 635 465 630M540 670 590 635 700 630 770 612M900 632 980 600M1030 607 1070 588M1220 660 1300 645 1440 600"/>
<path stroke="#ff9911" d="M0 565 40 552 120 580M185 565 230 590 290 635 385 665M420 665 470 655 540 672M780 630 830 642M1080 590 1130 600 1200 630 1260 640M1480 610 1520 625 1550 630"/>
<path stroke="#66ee66" d="M120 580 185 565M385 665 420 665M540 672 620 650 720 640 780 630M830 642 890 640 980 610 1080 590M1260 640 1350 635 1480 610M1550 630 1568 628"/>
<path class="mk" style="marker:url(#d3)" d="M30 552 712 650 808 635 1085 595 1480 612"/>
<path class="mk" style="marker:url(#u3)" d="M398 665 730 645 835 637 1298 637"/>
</g>
<g transform="translate(1275,686) scale(.40816,.33333)" fill="none" stroke-width="4.6">
<path fill="url(#rt)" d="M60 625V635L180 655 240 635 380 625zM480 625 600 650 680 640 700 625zM750 625V632L900 640 930 625z"/>
<path fill="url(#bm)" d="M390 625 420 605 450 625zM700 625 705 605 745 625z"/>
<path stroke="#2222ee" stroke-width="2" d="M0 625H930"/>
<path stroke="#aa11aa" d="M60 615 100 640M440 610 470 625 560 640 600 650M705 605 750 620 830 630 925 640"/>
<path stroke="#0a0a33" d="M0 640 60 625M100 640 180 655 240 635 330 635 380 625 420 605M600 650 670 635 705 605"/>
<path stroke="#ff9911" d="M60 612 130 635 200 650M280 642 300 642M440 618 470 625 550 635 640 655M740 620 790 630 845 633M880 630 930 640"/>
<path stroke="#66ee66" d="M0 628 45 620M200 650 230 645 280 642M300 642 390 625 440 618M640 655 690 645 740 620M845 633 880 630"/>
<path class="mk" style="marker:url(#d3)" d="M60 615 465 622 875 628 915 633"/>
<path class="mk" style="marker:url(#u3)" d="M45 622 203 647 638 650 888 632"/>
</g>

<!-- PANEL 4 -->
<g transform="translate(0,686) scale(.40816,.33333)" fill="none">
<path class="b" stroke="#33ff33" stroke-width="210" d="M70 823H86M98 823H125M550 823H562M574 823H600M627 823H667M680 823H694M760 823H772M811 823H892M1102 823H1115"/>
<path class="b" stroke="#ffff88" stroke-width="210" d="M86 823H98M125 823H165M483 823H550M562 823H574M600 823H627M667 823H680M694 823H760M772 823H811M1063 823H1102"/>
<path class="b" stroke="#660000" stroke-width="210" d="M165 823H178M892 823H905M1115 823H1129"/>
<path class="b" stroke="#6868bb" stroke-width="210" d="M178 823H258M272 823H310M905 823H918M943 823H957M1008 823H1023M1129 823H1208M1327 823H1407M1420 823H1447M1460 823H1498M1512 823H1524M1552 823H1568"/>
<path class="b" stroke="#aaeeff" stroke-width="210" d="M258 823H272M310 823H483M918 823H943M957 823H1008M1023 823H1063M1208 823H1327M1407 823H1420M1447 823H1460M1498 823H1512M1524 823H1552"/>
<path fill="url(#hb)" d="M70 902V885H125V902zM165 902V875L190 855 225 825 240 823V902zM270 902V830L290 805 310 802V902zM545 902V888H620V902zM620 902V885H690V902zM810 902V890L880 880 900 868V902zM1005 902V870H1022V902zM1100 902V880L1210 862V902zM1325 902V875L1400 842V902zM1520 902V845L1568 810V902z"/>
<path fill="url(#hr)" d="M240 902V823H270V902zM310 902V805L350 820 400 835 440 860 480 878V902zM480 902V880L545 890V902zM690 902V888H810V902zM905 902V868H1005V902zM1022 902V870H1100V902zM1210 902V862L1325 878V902zM1400 902V840H1520V902z"/>
<path stroke="#000" stroke-width="1.6" d="M70 884H1568"/>
<path stroke="#cc2222" stroke-width="2" d="M70 902H1568"/>
</g>
<g transform="translate(640,686) scale(.40816,.33333)" fill="none">
<path class="b" stroke="#33ff33" stroke-width="210" d="M1012 823H1028M1066 823H1171M1198 823H1210M1303 823H1330M1475 823H1487M1541 823H1568"/>
<path class="b" stroke="#ffff88" stroke-width="210" d="M855 823H1012M1028 823H1066M1171 823H1198M1210 823H1303M1330 823H1475M1487 823H1541"/>
<path class="b" stroke="#6868bb" stroke-width="210" d="M0 823H75M181 823H194M220 823H246M326 823H341M392 823H407M470 823H485M497 823H536M696 823H735M789 823H801"/>
<path class="b" stroke="#aaeeff" stroke-width="210" d="M75 823H181M194 823H220M246 823H326M341 823H392M407 823H470M485 823H497M536 823H696M735 823H789M801 823H855"/>
<path fill="url(#hb)" d="M0 902V780L30 740 75 730V902zM180 902V775H195V902zM220 902V768H246V902zM390 902V812H405V902zM465 902V826H535V902zM690 902V868H735V902zM787 902V865H800V902zM1010 902V915H1028V902zM1065 902V915H1080V902zM1070 902V892L1170 880V902zM1195 902V880H1212V902zM1303 902V885H1330V902zM1445 902V922H1485V902zM1540 902V922H1568V902z"/>
<path fill="url(#hr)" d="M75 902V733L130 745 180 775V902zM195 902V780H220V902zM246 902V770L330 800 390 812V902zM405 902V818L465 826V902zM535 902V822L600 855 690 875V902zM735 902V865L787 875V902zM800 902V870L860 880 940 895V902zM940 902V916H1010V902zM1028 902V916H1065V902zM1170 902V885H1195V902zM1212 902V885H1303V902zM1330 902 1350 902V915L1445 922V902zM1485 902V922H1540V902z"/>
<path stroke="#000" stroke-width="1.6" d="M0 884H1568"/>
<path stroke="#cc2222" stroke-width="2" d="M0 902H1568"/>
</g>
<g transform="translate(1275,686) scale(.40816,.33333)" fill="none">
<path class="b" stroke="#33ff33" stroke-width="210" d="M0 823H24M91 823H250M394 823H408M446 823H461M500 823H512M554 823H594M606 823H632M684 823H698M897 823H933"/>
<path class="b" stroke="#ffff88" stroke-width="210" d="M24 823H91M250 823H394M408 823H446M461 823H500M512 823H554M594 823H606M632 823H684M791 823H897"/>
<path class="b" stroke="#660000" stroke-width="210" d="M698 823H710"/>
<path class="b" stroke="#6868bb" stroke-width="210" d="M710 823H737"/>
<path class="b" stroke="#aaeeff" stroke-width="210" d="M737 823H791"/>
<path fill="url(#hb)" d="M0 902V922H20V902zM90 902V920H200V902zM205 902V890L250 880V902zM394 902V918H408V902zM445 902V920H460V902zM500 902V922H512V902zM552 902V915H560V902zM560 902V890L590 885V902zM605 902V880H632V902zM680 902V880L710 858 735 858V902zM895 902V915H935V902z"/>
<path fill="url(#hr)" d="M20 902V925H90V902zM250 902V880L350 900V902zM350 902V915H394V902zM408 902V920H445V902zM460 902V922H500V902zM512 902V925H552V902zM590 902V885H605V902zM632 902V885H680V902zM735 902V860L800 878 830 890V902zM840 902V915H895V902z"/>
<path stroke="#000" stroke-width="1.6" d="M0 884H928"/>
<path stroke="#cc2222" stroke-width="2" d="M0 902H935"/>
</g>

<!-- panel separators -->
<path class="f" stroke="#8a9aa5" stroke-width="1.2" d="M28 693.5H1915M28 781H1915M28 862.5H1915M28 925H1915M28 995.5H1915"/>

<!-- panel legends -->
<rect class="lg" x="28.5" y="694.5" width="149" height="14.5"/><rect x="33.5" y="698" width="6" height="8" fill="#222"/><rect x="33.5" y="698" width="3" height="8" fill="#778"/><text class="tb" x="43.7" y="706" textLength="131" lengthAdjust="spacingAndGlyphs">Sistema de trenes Doc v4 (f f)</text>
<rect class="lg" x="28.5" y="782.5" width="72.5" height="14.5"/><rect x="33" y="786" width="7" height="8" fill="#6f7f88"/><text class="tb" x="43" y="794" textLength="56" lengthAdjust="spacingAndGlyphs">Willy Doc (t)</text>
<rect class="lg" x="28.5" y="863.5" width="125.5" height="14.5"/><rect x="33" y="867" width="7" height="8" fill="#6f7f88"/><text class="tb" x="43" y="875" textLength="109" lengthAdjust="spacingAndGlyphs">Awesome Evolution Doc</text>
<rect class="lg" x="28.5" y="927.5" width="174.5" height="14.5"/><rect x="33.5" y="931" width="6" height="8" fill="#222"/><rect x="33.5" y="931" width="3" height="8" fill="#778"/><text class="tb" x="43" y="939" textLength="158" lengthAdjust="spacingAndGlyphs">Barra Fuerza Fondo Mercado v4 (f)</text>

<!-- right axis -->
<rect x="1878.5" y="22" width="36.5" height="988" fill="#fff"/>
<path class="f" stroke="#7f8f9a" stroke-width="1.5" d="M1878.5 22V1010"/>
<path class="f" stroke="#7f8f9a" stroke-width="1.2" d="M1878 71H1883M1878 119.5H1883M1878 168H1883M1878 216.5H1883M1878 265H1883M1878 313H1883M1878 361.5H1883M1878 458.5H1883M1878 507H1883M1878 555.5H1883M1878 604H1883M1878 652H1883M1878 701H1883M1878 716H1883M1878 739H1883M1878 788H1883M1878 806H1883M1878 823H1883M1878 841H1883M1878 875H1883M1878 937H1883M1878 961H1883"/>
<g class="ax">
<text x="1885" y="30" textLength="28" lengthAdjust="spacingAndGlyphs">14.000</text>
<text x="1885" y="74.5" textLength="28" lengthAdjust="spacingAndGlyphs">13.000</text>
<text x="1885" y="123" textLength="28" lengthAdjust="spacingAndGlyphs">12.000</text>
<text x="1885" y="171.5" textLength="28" lengthAdjust="spacingAndGlyphs">11.000</text>
<text x="1885" y="220" textLength="30" lengthAdjust="spacingAndGlyphs">10.000</text>
<text x="1885" y="268.5" textLength="23" lengthAdjust="spacingAndGlyphs">9.000</text>
<text x="1885" y="316.5" textLength="23" lengthAdjust="spacingAndGlyphs">8.000</text>
<text x="1885" y="365" textLength="23" lengthAdjust="spacingAndGlyphs">7.000</text>
<text x="1885" y="462" textLength="27" lengthAdjust="spacingAndGlyphs">5.000</text>
<text x="1885" y="511" textLength="23" lengthAdjust="spacingAndGlyphs">4.000</text>
<text x="1885" y="559" textLength="23" lengthAdjust="spacingAndGlyphs">3.000</text>
<text x="1885" y="608" textLength="23" lengthAdjust="spacingAndGlyphs">2.000</text>
<text x="1885" y="656" textLength="23" lengthAdjust="spacingAndGlyphs">1.000</text>
</g>
<rect class="bx" x="1883" y="380" width="32" height="13"/><text x="1885" y="390" font-size="10.5" font-weight="bold" fill="#bb7711" textLength="31" lengthAdjust="spacingAndGlyphs">6.489,7</text>
<rect class="bx" x="1883" y="393" width="32" height="11"/><text x="1885" y="402" font-size="10.5" font-weight="bold" fill="#b01818" textLength="31" lengthAdjust="spacingAndGlyphs">6.228,5</text>
<rect class="bx" x="1883" y="403.5" width="32" height="12"/><text x="1885" y="413" font-size="10.5" font-weight="bold" fill="#ee2222" textLength="31" lengthAdjust="spacingAndGlyphs">6.084,4</text>

<rect class="bx" x="1883" y="695" width="19" height="13"/><text class="ax" x="1885" y="705.5" textLength="15" lengthAdjust="spacingAndGlyphs">100</text>
<rect class="bx" x="1883" y="711" width="15" height="11"/><text class="ax" x="1885" y="720.5" textLength="11" lengthAdjust="spacingAndGlyphs" style="fill:#b07010">80</text>
<text class="ax" x="1885" y="734" textLength="11" lengthAdjust="spacingAndGlyphs">60</text>
<rect class="bx" x="1883" y="734" width="13" height="11"/><text class="ax" x="1885" y="743.5" style="fill:#2222bb" textLength="10" lengthAdjust="spacingAndGlyphs">50</text>
<text x="1885" y="766" font-size="10" fill="#c01818" textLength="30" lengthAdjust="spacingAndGlyphs">18.704</text>
<rect class="bx" x="1895" y="750" width="20" height="11"/><text class="ax" x="1885" y="759.5" textLength="30" lengthAdjust="spacingAndGlyphs">31.731</text>
<rect class="bx" x="1883" y="769" width="8" height="11"/><text class="ax" x="1884.5" y="778.5">0</text>
<rect class="bx" x="1892" y="769" width="23" height="11"/><text x="1893.5" y="778.5" font-size="10.5" font-weight="bold" fill="#ee2222">1267</text>

<rect class="bx" x="1883" y="783" width="8" height="11"/><text class="ax" x="1884.5" y="792.5">0</text>
<rect class="bx" x="1883" y="801" width="17" height="11"/><text class="ax" x="1885" y="810.5" style="fill:#2222bb" textLength="13" lengthAdjust="spacingAndGlyphs">-25</text>
<rect class="bx" x="1883" y="818" width="17" height="11"/><text class="ax" x="1885" y="827.5" style="fill:#2222bb" textLength="13" lengthAdjust="spacingAndGlyphs">-50</text>
<rect class="bx" x="1883" y="835" width="17" height="11"/><text class="ax" x="1885" y="844.5" style="fill:#c01818" textLength="13" lengthAdjust="spacingAndGlyphs">-75</text>
<text x="1906" y="855" font-size="10.5" font-weight="bold" fill="#c01818">49</text>
<rect class="bx" x="1883" y="849" width="20" height="12"/><text class="ax" x="1885" y="859" textLength="16" lengthAdjust="spacingAndGlyphs">-100</text>

<text class="ax" x="1885" y="879" textLength="23" lengthAdjust="spacingAndGlyphs">2.000</text>
<rect class="bx" x="1883" y="882" width="9" height="8"/><text class="ax" x="1885" y="890" style="fill:#2222bb">0</text>
<text class="ax" x="1885" y="918" textLength="26" lengthAdjust="spacingAndGlyphs">-2.000</text>
<rect class="bx" x="1883" y="893" width="32" height="8"/>
<rect class="bx" x="1883" y="901" width="32" height="12"/><text x="1885" y="911" font-size="10.5" font-weight="bold" fill="#ee2222" textLength="30" lengthAdjust="spacingAndGlyphs">-612,89</text>

<text class="ax" x="1885" y="941">4</text><text class="ax" x="1885" y="965">2</text>
<rect class="bx" x="1883" y="972" width="32" height="11"/><text class="ax" x="1885" y="981.5" textLength="28" lengthAdjust="spacingAndGlyphs">0,5000</text>
<rect class="bx" x="1883" y="984" width="32" height="10"/><text class="ax" x="1885" y="993" style="fill:#2222bb" textLength="30" lengthAdjust="spacingAndGlyphs">-0,1300</text>

<!-- x axis -->
<g class="ax" text-anchor="middle" font-size="11">
<text x="75.5" y="1009">mar</text><text x="123" y="1009">may</text><text x="172" y="1009">jul</text><text x="221" y="1009">sept</text><text x="264" y="1009">nov</text><text x="311" y="1009" font-weight="bold">2021</text><text x="355.5" y="1009">mar</text><text x="403" y="1009">may</text><text x="452" y="1009">jul</text><text x="501" y="1009">sept</text><text x="544" y="1009">nov</text><text x="592" y="1009" font-weight="bold">2022</text><text x="641" y="1009">mar</text><text x="683.7" y="1009">may</text><text x="732" y="1009">jul</text><text x="781.6" y="1009">sept</text><text x="829" y="1009">nov</text><text x="871.4" y="1009" font-weight="bold">2023</text><text x="921" y="1009">mar</text><text x="963.7" y="1009">may</text><text x="1012" y="1009">jul</text><text x="1061.6" y="1009">sept</text><text x="1109" y="1009">nov</text><text x="1152" y="1009" font-weight="bold">2024</text><text x="1201" y="1009">mar</text><text x="1248.6" y="1009">may</text><text x="1291.7" y="1009">jul</text><text x="1341.5" y="1009">sept</text><text x="1389" y="1009">nov</text><text x="1437.4" y="1009" font-weight="bold">2025</text><text x="1481" y="1009">mar</text><text x="1528.5" y="1009">may</text><text x="1577.4" y="1009">jul</text><text x="1621.5" y="1009">sept</text><text x="1670" y="1009">nov</text><text x="1718" y="1009" font-weight="bold">2026</text><text x="1761" y="1009">mar</text><text x="1809.7" y="1009">may</text><text x="1858" y="1009">jul</text>
</g>

<!-- bottom bar -->
<rect x="0" y="1010" width="1915" height="21" fill="#9bb5c2"/>
<path class="f" stroke="#7a909c" stroke-width="1" d="M28 1010.5H1915M160 1014.5H1752M160 1026.5H1752"/>
<rect x="148.5" y="1015" width="12" height="11" class="btn"/><text x="151" y="1024" font-size="10" font-weight="bold" fill="#222">‹</text>
<rect x="1503.5" y="1015" width="238" height="11" fill="#b5ced9" stroke="#7a929e"/>
<rect x="1752.5" y="1015" width="12" height="11" class="btn"/><text x="1756" y="1024" font-size="10" font-weight="bold" fill="#222">›</text>
<text x="135" y="1025" font-size="12" fill="#445">«</text>
<!-- bottom icons -->
<g fill="none" stroke-width="1.5">
<path stroke="#fff" d="M43 1014 34 1020 43 1026"/><circle cx="34" cy="1020" r="2" fill="#fff"/><circle cx="43" cy="1014" r="2" fill="#fff"/><circle cx="43" cy="1026" r="2" fill="#223"/>
<rect x="54" y="1014" width="8" height="10" fill="#dfe9f2" stroke="#669"/><rect x="57" y="1018" width="9" height="9" fill="#4488dd" stroke="#26a"/>
<rect x="76" y="1014" width="9" height="13" fill="#f4f4f4" stroke="#555"/><path stroke="#c33" d="M78 1017H83"/><path stroke="#3a3" d="M78 1021H83"/>
<path stroke="#228822" stroke-width="3" d="M98 1014V1027"/><path stroke="#dd3333" stroke-width="3" d="M103 1014V1027"/>
<rect x="117" y="1013" width="9" height="9" fill="#f4f4f4" stroke="#26a"/><rect x="121" y="1018" width="9" height="9" fill="#e8f0fa" stroke="#26a"/>
<path stroke="#7fa8c8" stroke-width="2.4" d="M1773 1019C1781 1013 1786 1019 1781 1027M1772 1015V1021H1778"/>
<path stroke="#7fa8c8" stroke-width="2.4" d="M1805 1019C1797 1013 1792 1019 1797 1027M1806 1015V1021H1800"/>
<rect x="1815" y="1018" width="7" height="9" fill="#d04040" stroke="#822"/><rect x="1821" y="1013" width="8" height="14" fill="#33bb33" stroke="#161"/><path stroke="#fff" stroke-width="2" d="M1819 1024 1826 1016"/>
<circle cx="1841" cy="1018" r="4.5" fill="#dde" stroke="#222"/><path stroke="#222" stroke-width="2.5" d="M1844 1022 1848 1026"/><path stroke="#2244dd" d="M1852 1013V1023M1836 1028H1844"/>
<circle cx="1864" cy="1018" r="4.5" fill="#fff" stroke="#222"/><path stroke="#2244dd" d="M1861.5 1018H1866.5"/><path stroke="#222" stroke-width="2.5" d="M1867 1022 1871 1026"/>
<circle cx="1885" cy="1018" r="4.5" fill="#fff" stroke="#222"/><path stroke="#2244dd" d="M1882.5 1018H1887.5M1885 1015.5V1020.5"/><path stroke="#222" stroke-width="2.5" d="M1888 1022 1892 1026"/>
<path stroke="#334" stroke-width="3" stroke-dasharray="1.5 1" d="M1903 1015H1915"/><path stroke="#2266cc" stroke-width="2.5" d="M1909 1019V1028"/>
</g>

<!-- left toolbar -->
<rect x="0" y="22" width="28" height="1009" fill="#9cb6c3"/>
<path class="f" stroke="#7a909c" stroke-width="1" d="M28 22V1031"/>
<rect x="3.5" y="36" width="21" height="21" rx="3" fill="#8aa3af" stroke="#6b8290"/>
<path fill="#c4ccd2" stroke="#667" d="M11 39V52L14 49 16 54 18 53 16 48 20 48z"/>
<text x="10" y="31" font-size="8" fill="#66808c">^</text>
<g fill="none" stroke-width="1.4">
<circle cx="13" cy="67" r="4.2" stroke="#334"/><path stroke="#334" d="M16 70 20 74"/>
<circle cx="14" cy="89" r="4.5" stroke="#334"/><path stroke="#334" d="M17 92 21 96M6 87H10M6 87V95H14" /><path stroke="#2266aa" stroke-dasharray="1 1" d="M6 87V95H14"/>
<path fill="#ffcc22" stroke="#886600" d="M7 118C10 112 9 108 13 107 17 108 16 112 19 118z"/><path stroke="#3366aa" d="M16 106 21 111M21 106 16 111"/>
<path fill="#ffcc22" stroke="#886600" d="M8 139C11 133 10 129 14 128 18 129 17 133 20 139z"/><path stroke="#889" d="M7 127 9 129M21 127 19 129"/>
<path stroke="#2244cc" d="M6 160 10 151 12 160M12 155H20"/><path stroke="#dd7744" stroke-dasharray="2 1" d="M12 153H22"/><path stroke="#2244cc" d="M20 156V163H23"/>
<path stroke="#dd7744" stroke-dasharray="2 1" d="M9 179H20"/><path stroke="#2244cc" d="M9 182H18M20 182V189M20 182H23M20 185H22"/>
<rect x="8" y="195" width="12" height="9" stroke="#2244cc"/><path stroke="#2244cc" d="M7 206 9 204M19 194 21 192"/>
<rect x="8" y="217" width="12" height="9" fill="#c09aa5" stroke="#dd1111"/>
<path stroke="#222" stroke-width="2" d="M9 249 19 239"/><path fill="#222" stroke="#222" d="M21 237 16 238 20 242z"/><circle cx="9" cy="249" r="1.8" stroke="#222"/>
<rect x="8" y="259" width="13" height="13" rx="3" stroke="#6688cc"/>
<circle cx="14" cy="288" r="6.5" stroke="#6688cc"/>
<circle cx="8.5" cy="315" r="1.5" stroke="#222"/><circle cx="18.5" cy="305" r="1.5" stroke="#222"/><path stroke="#222" d="M10 314 17 306"/>
<path stroke="#33aa33" stroke-width="1.6" d="M11 332H23"/><circle cx="12" cy="332" r="1.8" stroke="#33aa33"/>
<path stroke="#e02222" stroke-width="1.6" d="M11 354H23"/><circle cx="12" cy="354" r="1.8" stroke="#e02222"/>
<rect x="7" y="371" width="16" height="7" stroke="#445" fill="#c8d2d8" transform="rotate(-45 15 374.5)"/>
<path stroke="#6a9a6a" stroke-dasharray="1 1" d="M6 391H22"/><path stroke="#aa99bb" stroke-width="4" d="M8 401H22"/><path stroke="#dff" d="M6 403 12 396 16 399 22 391"/>
</g>
<text x="11" y="270" font-size="11" font-weight="bold" fill="#111">T</text>
<text x="11" y="292" font-size="11" font-weight="bold" fill="#118822">T</text>
<g fill="none" stroke-width="1.4">
<ellipse cx="14" cy="420" rx="6.5" ry="5" fill="#b6a0a8" stroke="#dd1111"/><path stroke="#2244cc" d="M6 427 8 425M20 414 22 412"/>
<ellipse cx="14" cy="442" rx="6.5" ry="5" fill="#a09a88" stroke="#885511"/><path stroke="#2244cc" d="M6 449 8 447M20 436 22 434"/>
<ellipse cx="14" cy="464" rx="6.5" ry="5" fill="#88a890" stroke="#116611"/><path stroke="#2244cc" d="M6 471 8 469M20 458 22 456"/>
<ellipse cx="14" cy="486" rx="6.5" ry="5" fill="#88d890" stroke="#22cc22"/><path stroke="#2244cc" d="M6 493 8 491M20 480 22 478"/>
<path stroke="#222" d="M6 516 22 500"/><path stroke="#33aa33" stroke-width="1.6" d="M6 538 22 522"/><path stroke="#e02222" stroke-width="1.6" d="M6 560 22 544"/>
<path stroke="#111" stroke-width="1.4" d="M5 574H23"/><path stroke="#ee9988" stroke-width="2" d="M5 596H23"/><path stroke="#22ee22" stroke-width="2" d="M5 618H23"/><path stroke="#117711" stroke-width="2" d="M5 640H23"/><path stroke="#ee2222" stroke-width="2" d="M5 662H23"/><path stroke="#6699ee" stroke-width="2" d="M5 684H23"/><path stroke="#1122aa" stroke-width="2" d="M5 706H23"/><path stroke="#111" stroke-width="1.4" d="M14 719V737"/>
<path stroke="#dd5533" d="M6 755 16 743M6 755H22"/><circle cx="14" cy="771" r="6" stroke="#dd7744"/><path stroke="#2244cc" d="M11 771H17M14 768V774"/>
<path stroke="#2244cc" stroke-dasharray="2 1" d="M6 800 22 786M6 786 22 800"/>
<path stroke="#2244cc" stroke-dasharray="2 1" d="M6 822 20 808M8 808 20 822"/>
</g>
<path fill="#44aa33" d="M7 838 10 835 13 838 20 829 22 832 13 844z"/>
<path fill="#55bb44" d="M8 857H11V868H8zM12 857 16 850 18 852 17 856H22L21 868H12z"/>
<path fill="#ee2222" d="M7 877 10 875 14 880 18 875 21 877 17 882 21 887 18 890 14 885 10 890 7 887 11 882z"/>
<path fill="#eeb92b" stroke="#a06a11" d="M14 897 22 911H6z"/><rect x="13.3" y="901" width="1.6" height="5" fill="#a01111"/><rect x="13.3" y="907" width="1.6" height="1.6" fill="#a01111"/>
<path fill="#44aa33" d="M14 919 20 926H17V933H11V926H8z"/>
<rect x="1" y="944" width="26" height="11" fill="#b9d0da"/><path fill="none" stroke="#334" stroke-width="1.4" d="M11 948 14 951 17 948"/>
<rect x="9" y="961" width="11" height="14" fill="#eef" stroke="#778"/><circle cx="9.5" cy="963" r="3.2" fill="#22aa22"/><text x="8.3" y="965.5" font-size="5.5" fill="#fff">1</text><path fill="none" stroke="#333" d="M13 976 19 970"/>
<text x="8" y="1001" font-size="12" font-weight="bold" fill="#222">•••</text>
<rect x="0" y="1010" width="28" height="21" fill="#9cb6c3"/><path fill="none" stroke="#555" stroke-width="1.4" d="M7 1028V1015L12 1026 14 1015"/><path fill="none" stroke="#ee8800" stroke-width="2" d="M13 1026 21 1014"/>

<!-- top toolbar -->
<rect x="0" y="0" width="1915" height="22" fill="url(#tg)"/>
<path class="f" stroke="#4e6777" stroke-width="1.2" d="M0 .5H1915M0 21.8H1915"/>
<g fill="none" stroke="#7f97a3" stroke-width="1">
<path d="M22.5 1V21M46.5 1V21M75.5 1V21M288.5 1V21M351.5 1V21M444.5 1V21M527.5 1V21M613.5 1V21M626.5 1V21M1850.5 1V21M1870.5 1V21"/>
</g>
<path fill="none" stroke="#44aa44" stroke-width="2.5" d="M8 15V11M12 13V8M16 10V5"/><path fill="none" stroke="#338833" d="M8 9V17M12 6V15M16 3V12"/>
<path fill="none" stroke="#6b828e" stroke-width="1.6" d="M28 6H33V10H28zM28 12H33V16H28z"/>
<text class="tb" x="43" y="15.5" font-size="12">CL</text><path fill="none" stroke="#223" stroke-width="1.3" d="M62 10 65 13 68 10"/>
<rect class="btn" x="77.5" y="3.5" width="24.5" height="15" rx="3"/><text class="tb" x="80" y="15" textLength="20" lengthAdjust="spacingAndGlyphs">144s</text>
<rect class="btn" x="106.5" y="3.5" width="18" height="15" rx="3"/><text class="tb" x="109" y="15" textLength="13" lengthAdjust="spacingAndGlyphs">1m</text>
<rect class="btn" x="128.5" y="3.5" width="23.5" height="15" rx="3"/><text class="tb" x="131" y="15" textLength="19" lengthAdjust="spacingAndGlyphs">12m</text>
<rect class="btn" x="155.5" y="3.5" width="22.5" height="15" rx="3"/><text class="tb" x="157.5" y="15" textLength="19" lengthAdjust="spacingAndGlyphs">56m</text>
<rect class="btn" x="182.5" y="3.5" width="15.5" height="15" rx="3"/><text class="tb" x="185" y="15" textLength="10.5" lengthAdjust="spacingAndGlyphs">1h</text>
<rect class="btn" x="202.5" y="3.5" width="15.5" height="15" rx="3"/><text class="tb" x="205" y="15" textLength="10.5" lengthAdjust="spacingAndGlyphs">4h</text>
<rect class="btn" x="222.5" y="3.5" width="13" height="15" rx="3"/><text class="tb" x="225.5" y="15">D</text>
<rect class="on" x="239" y="3.5" width="13.5" height="15" rx="3"/><text class="tb" x="241" y="15">W</text>
<rect class="btn" x="256.5" y="3.5" width="13" height="15" rx="3"/><text class="tb" x="258.5" y="15" textLength="9" lengthAdjust="spacingAndGlyphs">M</text>
<rect class="btn" x="272.5" y="3.5" width="12.5" height="15" rx="3"/><text class="tb" x="275" y="15" textLength="8" lengthAdjust="spacingAndGlyphs">Q</text>
<text class="tb" x="294" y="15" textLength="41" lengthAdjust="spacingAndGlyphs">1 semana</text><path fill="none" stroke="#223" stroke-width="1.3" d="M341 10 344 13 347 10"/>
<rect class="btn" x="355.5" y="3.5" width="22" height="15" rx="3"/><text class="tb" x="358" y="15" textLength="17" lengthAdjust="spacingAndGlyphs">5kU</text>
<rect class="on" x="381.5" y="3.5" width="26.5" height="15" rx="3"/><text class="tb" x="384" y="15" textLength="22" lengthAdjust="spacingAndGlyphs">10kU</text>
<rect class="btn" x="412.5" y="3.5" width="27" height="15" rx="3"/><text class="tb" x="415" y="15" textLength="22" lengthAdjust="spacingAndGlyphs">35kU</text>
<text class="tb" x="449" y="15" textLength="63" lengthAdjust="spacingAndGlyphs">10 k unidades</text><path fill="none" stroke="#223" stroke-width="1.3" d="M517 10 520 13 523 10"/>
<path fill="none" stroke="#cc3333" stroke-width="1.2" d="M533 7 538 4 543 9 549 7"/><path fill="none" stroke="#228855" stroke-width="1.2" d="M533 11 538 7 544 12 549 11"/><rect x="534" y="15" width="2.5" height="4" fill="#33aa33"/><rect x="538" y="14" width="2.5" height="5" fill="#cc3333"/><rect x="542" y="15" width="2.5" height="4" fill="#33aa33"/><rect x="546" y="14" width="2.5" height="5" fill="#33aa33"/>
<text class="tb" x="554" y="15" textLength="54" lengthAdjust="spacingAndGlyphs">Indicadores</text><path fill="none" stroke="#223" stroke-width="1.3" d="M616 10 619 13 622 10"/>
<rect x="635" y="4" width="8" height="14" fill="#f4f4f4" stroke="#7a929e"/>
<circle cx="655.5" cy="11" r="3.5" fill="#7f8f98"/>
<rect x="665" y="4" width="39.5" height="13" rx="2" fill="#5cdc5c" stroke="#44aa44"/><text x="668" y="14.5" font-size="11" fill="#fff" textLength="34" lengthAdjust="spacingAndGlyphs">+0,29 %</text>
<text class="tb" x="709" y="15" font-weight="bold" textLength="50" lengthAdjust="spacingAndGlyphs">17 oct 2025</text>
<text class="tb" x="763" y="15" textLength="79" lengthAdjust="spacingAndGlyphs">Crudo EE.UU. (1€)</text>
<path fill="none" stroke="#e03333" stroke-width="1.8" d="M1863 6C1857 5 1855 10 1857 15"/><path fill="#e03333" d="M1853 11H1861L1857 16z"/>
<path fill="none" stroke="#22aa22" stroke-width="1.8" d="M1858 17C1864 18 1866 13 1864 8"/><path fill="#22aa22" d="M1860 12H1868L1864 7z"/>
<path fill="none" stroke="#7a929e" stroke-width="2" d="M1876 15H1884"/><rect x="1888.5" y="7.5" width="6" height="7" fill="none" stroke="#7a929e"/><rect x="1891" y="5.5" width="6" height="6" fill="#a9c5d1" stroke="#7a929e"/>
<path fill="none" stroke="#7a929e" stroke-width="2" d="M1904 7 1912 15M1912 7 1904 15"/>

<!-- legend row -->
<rect x="28" y="22" width="747.5" height="15.5" fill="#c9d8df"/>
<path class="f" stroke="#7f97a3" stroke-width="1" d="M28 37.5H775.5V22"/>
<rect x="31" y="24.5" width="11" height="11" fill="#eef3f6" stroke="#7f97a3"/><path fill="#e02222" d="M35 26H38V29.5H40L36.5 34 33 29.5H35z"/>
<rect x="44" y="24.5" width="11" height="11" fill="#eef3f6" stroke="#7f97a3"/><path fill="#22aa22" d="M49.5 26 53 30.5H51V34H48V30.5H46z"/>
<rect class="lg" x="59" y="22.5" width="46" height="14.5"/><rect x="62" y="25" width="7.5" height="10" fill="#eef" stroke="#778"/><text class="tb" x="74" y="34" textLength="29" lengthAdjust="spacingAndGlyphs">Precio</text>
<rect class="lg" x="106" y="22.5" width="15.6" height="14.5"/><path fill="none" stroke="#222" stroke-width="1.2" stroke-dasharray="1.2 .8" d="M110 26H118M110 29.5H118M110 33H118"/>
<rect class="lg" x="122.4" y="22.5" width="63.3" height="14.5"/><rect x="126" y="25" width="7.5" height="10" fill="#eef" stroke="#778"/><text class="tb" x="138" y="34" textLength="46" lengthAdjust="spacingAndGlyphs">Cierre (W)</text>
<rect class="lg" x="187" y="22.5" width="135.4" height="14.5"/><rect x="190" y="26" width="8" height="8" fill="#6f8793"/><text class="tb" x="202" y="34" textLength="119" lengthAdjust="spacingAndGlyphs">Tunel Domenec v4 (t t t t t)</text>
<rect class="lg" x="323.7" y="22.5" width="139.3" height="14.5"/><rect x="327" y="26" width="8" height="8" fill="#111"/><text class="tb" x="339" y="34" textLength="123" lengthAdjust="spacingAndGlyphs">Multi Avisos (3 f 3 1,5 70 f f)</text>
<rect class="lg" x="464.5" y="22.5" width="195.5" height="14.5"/><rect x="468" y="25" width="7.5" height="10" fill="#eef" stroke="#778"/><text class="tb" x="480" y="34" textLength="178" lengthAdjust="spacingAndGlyphs">DS_CotasHist (1 t t t 3 1 1 f f f f f f t f f ...)</text>
<rect class="lg" x="661" y="22.5" width="114.5" height="14.5"/><rect x="664.5" y="25.5" width="1.6" height="10" fill="#22aa22"/><rect x="667" y="25.5" width="1.6" height="10" fill="#2255cc"/><rect x="669.5" y="25.5" width="1.6" height="10" fill="#dd9922"/><rect x="672" y="25.5" width="1.6" height="10" fill="#22aa88"/><text class="tb" x="676" y="34" textLength="97" lengthAdjust="spacingAndGlyphs">Control Total Doc v.6</text>
</svg>
</body></html>
